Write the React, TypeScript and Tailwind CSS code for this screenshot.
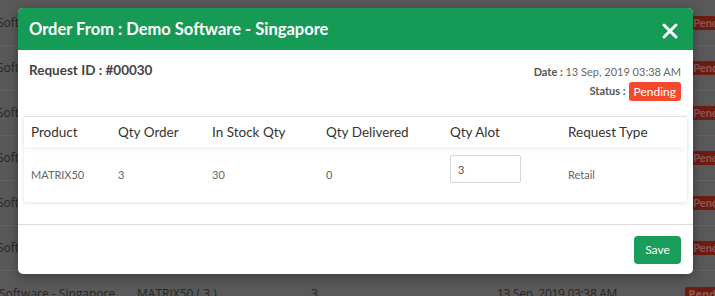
import React from 'react'

const bgRows = [0, 1, 2, 3, 4, 5]

const cols = ['w-[87px]', 'w-[94px]', 'w-[114px]', 'w-[124px]', 'w-[118px]', 'flex-1']

export default function App() {
  return (
    <div className="relative w-[715px] h-[296px] overflow-hidden bg-[#595959]" style={{ fontFamily: 'Lato, "Open Sans", sans-serif' }}>
      {/* fondo: tabla detrás del overlay */}
      <div className="flex flex-col pt-[1px]">
        {bgRows.map(i => (
          <div key={i} className="h-[45px] flex items-center border-b border-[#636363] text-[12px] text-[#262626]">
            <span className="ml-[-3px] w-[130px]" style={{ fontFamily: '"Open Sans", sans-serif' }}>Software - Singapore</span>
            <div className="flex-1" />
            <span className="mr-[-22px] px-[4px] h-[14px] leading-[14px] text-[11px] bg-[#6e1c12] text-[#8a5a55] rounded-[2px] font-bold">Pending</span>
          </div>
        ))}
        <div className="h-[45px] flex items-center text-[12px] text-[#262626]" style={{ fontFamily: '"Open Sans", sans-serif' }}>
          <span className="ml-[-1px] w-[138px]">Software - Singapore</span>
          <span className="w-[174px]">MATRIX50 ( 3 )</span>
          <span className="w-[186px]">3</span>
          <span className="tracking-[-0.3px]">13 Sep, 2019 03:38 AM</span>
          <div className="flex-1" />
          <span className="mr-[-22px] px-[4px] h-[14px] leading-[14px] text-[11px] bg-[#6e1c12] text-[#8a5a55] rounded-[2px] font-bold">Pending</span>
        </div>
      </div>

      {/* modal */}
      <div className="absolute left-[18px] top-[8px] w-[675px] h-[266px] bg-white rounded-[5px] shadow-[0_3px_12px_rgba(0,0,0,0.35)] overflow-hidden flex flex-col">
        <div className="h-[42px] bg-[#169b57] flex items-center justify-between pl-[11px] pr-[15px]">
          <h2 className="text-white font-bold text-[16.5px] leading-none">Order From : Demo Software - Singapore</h2>
          <svg width="16" height="16" viewBox="0 0 16 16" className="mt-[4px]">
            <path d="M2 2 L14 14 M14 2 L2 14" stroke="white" strokeWidth="3" strokeLinecap="round" />
          </svg>
        </div>

        <div className="flex justify-between pl-[11px] pr-[12px] pt-[12px] h-[66px]">
          <div className="text-[13.5px] font-bold text-[#444] leading-[16px]">Request ID : #00030</div>
          <div className="flex flex-col items-end">
            <div className="text-[11px] text-[#666] leading-[16px] mt-[2px]">
              <span className="font-bold text-[#555]">Date : </span>13 Sep, 2019 03:38 AM
            </div>
            <div className="flex items-center mt-[2px]">
              <span className="text-[11px] font-bold text-[#555] mr-[3px]">Status : </span>
              <span className="h-[19px] px-[5px] flex items-center rounded-[3px] bg-[#f4492d] text-white text-[12px]">Pending</span>
            </div>
          </div>
        </div>

        {/* tabla */}
        <div className="mx-[6px] border-t border-[#e3e3e3] shadow-[0_1px_4px_rgba(0,0,0,0.12)]">
          <div className="h-[30px] flex items-center pl-[7px] text-[13.5px] text-[#333] shadow-[0_3px_5px_rgba(0,0,0,0.05)]">
            {['Product', 'Qty Order', 'In Stock Qty', 'Qty Delivered', 'Qty Alot', 'Request Type'].map((h, i) => (
              <div key={h} className={cols[i]}>{h}</div>
            ))}
          </div>
          <div className="h-[55px] flex items-start pl-[7px] text-[11px] text-[#666]">
            <div className={`${cols[0]} pt-[20px] leading-[16px]`}>MATRIX50</div>
            <div className={`${cols[1]} pt-[20px] leading-[16px]`}>3</div>
            <div className={`${cols[2]} pt-[20px] leading-[16px]`}>30</div>
            <div className={`${cols[3]} pt-[20px] leading-[16px]`}>0</div>
            <div className={`${cols[4]} pt-[8px]`}>
              <input defaultValue="3" className="w-[71px] h-[28px] border border-[#d6d6d6] rounded-[2px] px-[7px] text-[11px] text-[#555] outline-none" />
            </div>
            <div className={`${cols[5]} pt-[20px] leading-[16px]`}>Retail</div>
          </div>
        </div>

        <div className="mt-[22px] border-t border-[#dcdcdc] flex justify-end pr-[12px] pt-[11px]">
          <button className="w-[47px] h-[28px] rounded-[4px] bg-[#189e5a] text-white text-[12px]">Save</button>
        </div>
      </div>
    </div>
  )
}
